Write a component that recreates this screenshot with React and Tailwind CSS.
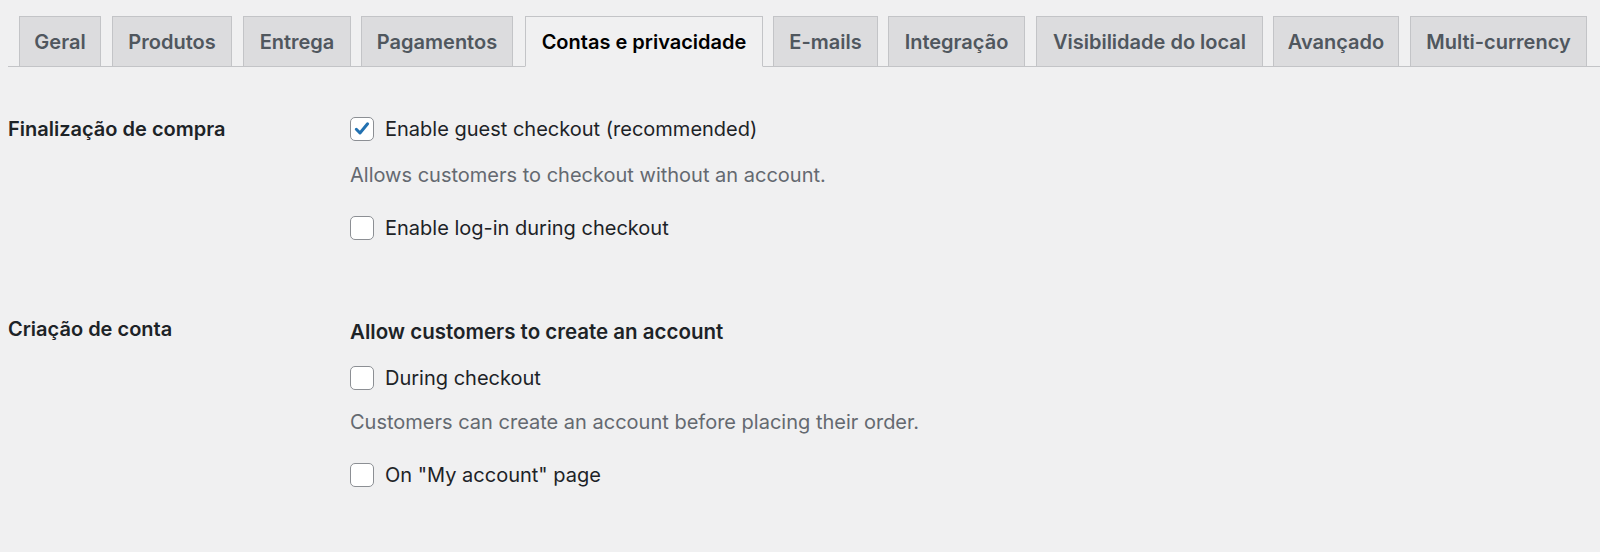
import React from 'react';

const tabs = [
  { label: 'Geral', w: 'w-[82px]', ml: 'ml-[11px]' },
  { label: 'Produtos', w: 'w-[120px]', ml: 'ml-[11px]' },
  { label: 'Entrega', w: 'w-[108px]', ml: 'ml-[11px]' },
  { label: 'Pagamentos', w: 'w-[152px]', ml: 'ml-[10px]' },
  { label: 'Contas e privacidade', w: 'w-[238px]', ml: 'ml-[12px]', active: true },
  { label: 'E-mails', w: 'w-[105px]', ml: 'ml-[10px]' },
  { label: 'Integração', w: 'w-[137px]', ml: 'ml-[10px]' },
  { label: 'Visibilidade do local', w: 'w-[227px]', ml: 'ml-[11px]' },
  { label: 'Avançado', w: 'w-[126px]', ml: 'ml-[10px]' },
  { label: 'Multi-currency', w: 'w-[177px]', ml: 'ml-[11px]' },
];

function Checkbox({ checked }) {
  return (
    <span className="flex h-[24px] w-[24px] shrink-0 items-center justify-center rounded-[5px] border border-[#8c8f94] bg-white">
      {checked && (
        <svg viewBox="0 0 20 20" className="h-[20px] w-[20px]">
          <path d="M4.3 10.3 L8 14 L15.6 4.8" fill="none" stroke="#2271b1" strokeWidth="3" strokeLinecap="round" strokeLinejoin="round" />
        </svg>
      )}
    </span>
  );
}

function Option({ checked, children, className = '' }) {
  return (
    <label className={`flex h-[28px] items-center gap-[11px] text-[20px] text-[#1d2327] ${className}`}>
      <Checkbox checked={checked} />
      <span>{children}</span>
    </label>
  );
}

export default function App() {
  return (
    <div className="min-h-[552px] bg-[#f0f0f1] pl-[8px] font-['Inter',sans-serif]">
      <nav className="flex border-b border-[#c3c4c7] pt-[16px]">
        {tabs.map((t) => (
          <a
            key={t.label}
            className={`${t.w} ${t.ml} -mb-px flex h-[51px] shrink-0 items-center justify-center border text-[20px] font-semibold ${
              t.active
                ? 'border-[#c3c4c7] border-b-[#f0f0f1] bg-[#f0f0f1] text-black'
                : 'border-[#c3c4c7] bg-[#dcdcde] text-[#50575e]'
            }`}
          >
            {t.label}
          </a>
        ))}
      </nav>

      <div className="mt-[48px] flex">
        <div className="w-[342px] shrink-0 text-[20px] leading-[28px] font-semibold text-[#1d2327]">
          Finalização de compra
        </div>
        <div className="flex flex-col">
          <Option checked>Enable guest checkout (recommended)</Option>
          <p className="mt-[18px] text-[20px] leading-[28px] text-[#646970]">
            Allows customers to checkout without an account.
          </p>
          <Option className="mt-[25px]">Enable log-in during checkout</Option>
        </div>
      </div>

      <div className="mt-[73px] flex">
        <div className="w-[342px] shrink-0 text-[20px] leading-[28px] font-semibold text-[#1d2327]">
          Criação de conta
        </div>
        <div className="flex flex-col">
          <p className="mt-[3px] text-[20.5px] leading-[28px] font-semibold text-[#1d2327]">
            Allow customers to create an account
          </p>
          <Option className="mt-[18px]">During checkout</Option>
          <p className="mt-[16px] text-[20px] leading-[28px] text-[#646970]">
            Customers can create an account before placing their order.
          </p>
          <Option className="mt-[25px]">On "My account" page</Option>
        </div>
      </div>
    </div>
  );
}
